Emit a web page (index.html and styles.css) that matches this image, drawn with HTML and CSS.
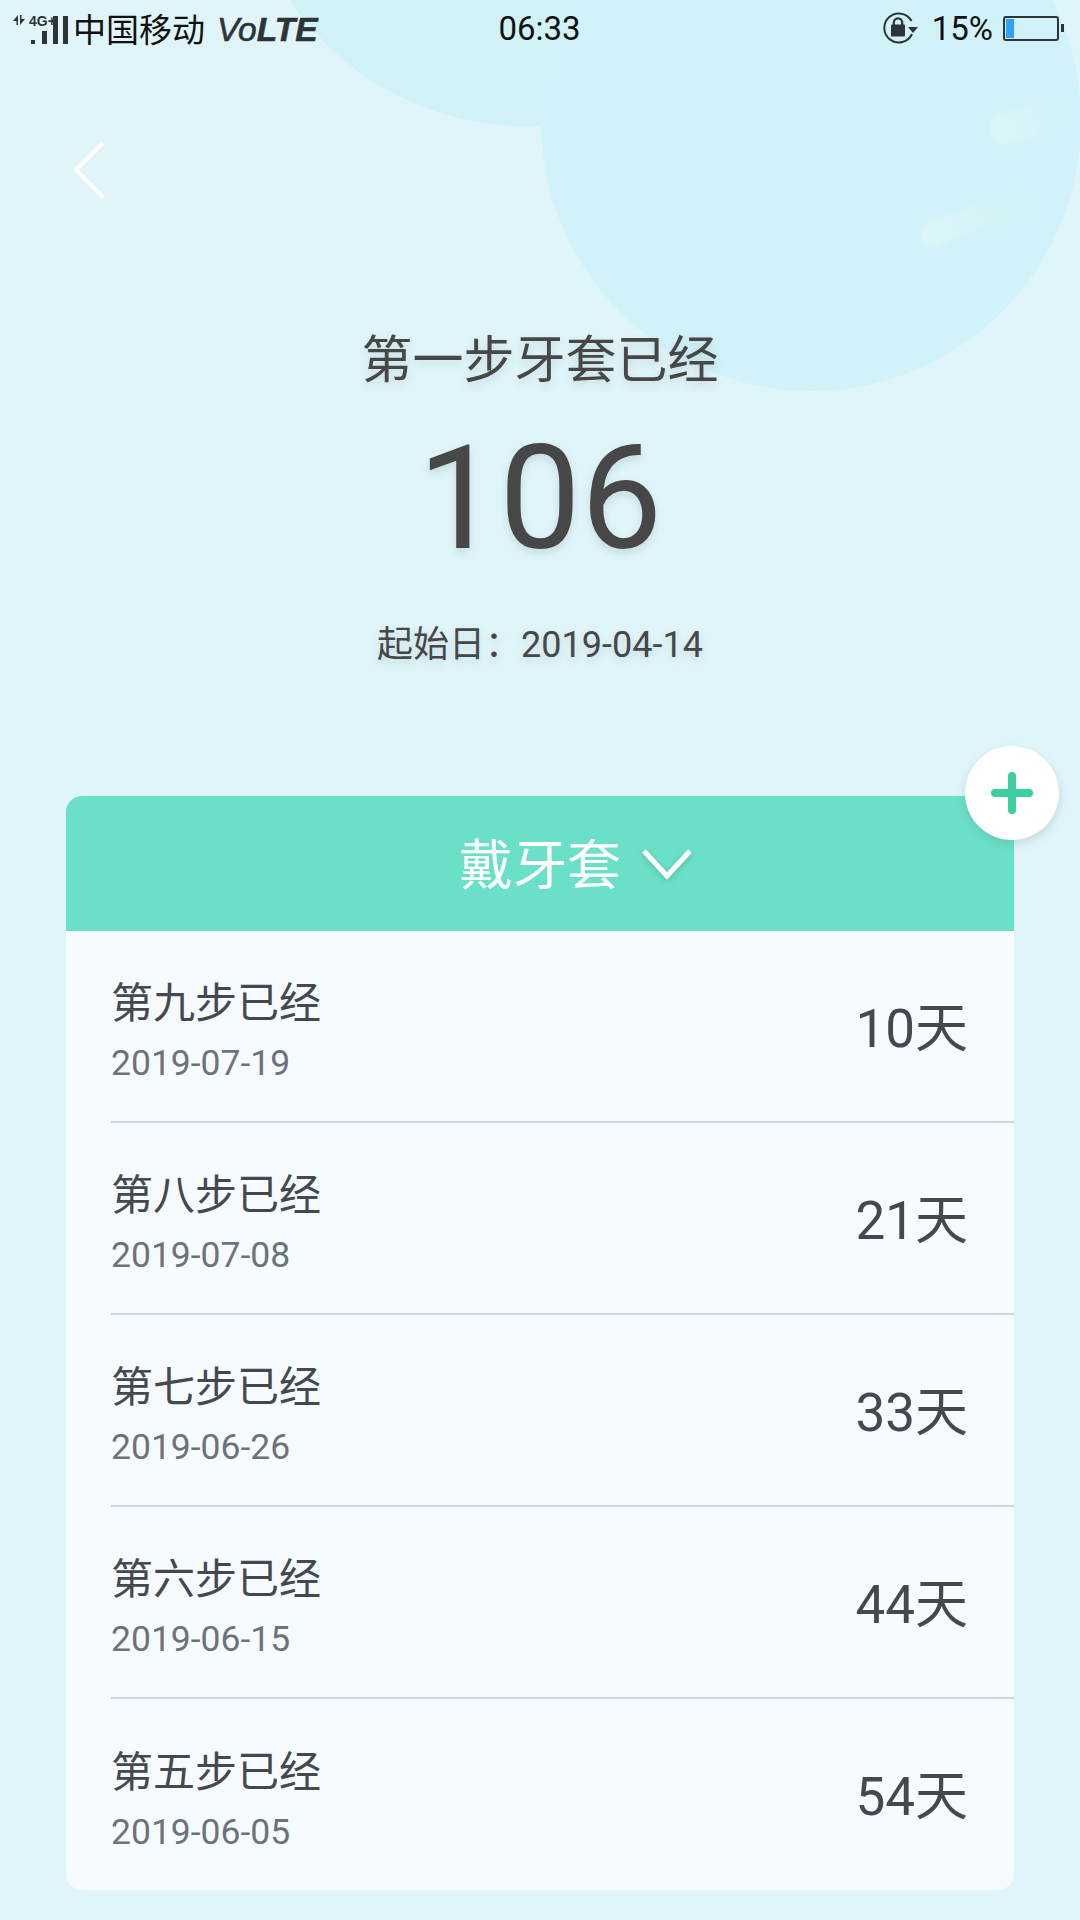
FILE: index.html

```html
<!DOCTYPE html>
<html lang="zh-CN">
<head>
  <meta charset="UTF-8">
  <title>牙套记录</title>
  <link rel="stylesheet" href="styles.css">
</head>
<body>

<div class="page">
  <div class="blob blob-top"></div>
  <div class="blob blob-right"></div>
  <div class="flake flake-a"></div>
  <div class="flake flake-b"></div>

  <div class="statusbar">
    <div class="status-left">
      <svg class="signal" width="60" height="44" viewBox="0 -8 60 44">
        <path d="M6 0 V10 H4.5 V6 H1 Z M8 10 V0 H9.5 V4 H13 Z" fill="#2d3438"/>
        <rect x="19" y="25" width="4" height="4" fill="#2d3438"/>
        <rect x="30" y="16" width="5" height="13" fill="#2d3438"/>
        <rect x="41" y="1" width="5" height="28" fill="#2d3438"/>
        <rect x="51" y="1" width="5" height="28" fill="#2d3438"/>
        <text x="17" y="11" class="signal-label">4G+</text>
      </svg>
      <span class="carrier">中国移动</span>
      <span class="volte">Vo<b>LTE</b></span>
    </div>
    <div class="clock">06:33</div>
    <div class="status-right">
      <svg class="rotate-lock" width="37" height="32" viewBox="0 0 37 32">
        <path d="M29.5 9 A14.5 14.5 0 1 0 30 22" fill="none" stroke="#2d3438" stroke-width="2"/>
        <path d="M26 15 H36 L31 21 Z" fill="#2d3438"/>
        <rect x="9" y="12.5" width="14" height="12" rx="1" fill="#2d3438"/>
        <path d="M11.8 13 V10.5 A4.2 4.2 0 0 1 20.2 10.5 V13" fill="none" stroke="#2d3438" stroke-width="2.2"/>
      </svg>
      <span class="percent">15%</span>
      <div class="battery"><div class="battery-fill"></div></div>
      <div class="battery-cap"></div>
    </div>
  </div>

  <div class="back">
    <svg width="32" height="58" viewBox="0 0 32 58">
      <path d="M30 2 L3 29 L30 56" fill="none" stroke="#fff" stroke-width="4"/>
    </svg>
  </div>

  <div class="hero">
    <div class="hero-title">第一步牙套已经</div>
    <div class="hero-days">106</div>
    <div class="hero-date">起始日：2019-04-14</div>
  </div>

  <div class="card">
    <div class="fab">
      <svg width="42" height="42" viewBox="0 0 42 42">
        <path d="M21 4 V38 M4 21 H38" stroke="#3ccf9f" stroke-width="8" stroke-linecap="round"/>
      </svg>
    </div>
    <div class="card-head">
      <span class="head-label">戴牙套
        <svg class="head-arrow" width="50" height="32" viewBox="0 0 50 32">
          <path d="M2 3 L25 28 L48 3" fill="none" stroke="#fff" stroke-width="5"/>
        </svg>
      </span>
    </div>
    <div class="row">
      <div class="row-text">
        <div class="row-title">第九步已经</div>
        <div class="row-date">2019-07-19</div>
      </div>
      <div class="row-days">10天</div>
    </div>
    <div class="row">
      <div class="row-text">
        <div class="row-title">第八步已经</div>
        <div class="row-date">2019-07-08</div>
      </div>
      <div class="row-days">21天</div>
    </div>
    <div class="row">
      <div class="row-text">
        <div class="row-title">第七步已经</div>
        <div class="row-date">2019-06-26</div>
      </div>
      <div class="row-days">33天</div>
    </div>
    <div class="row">
      <div class="row-text">
        <div class="row-title">第六步已经</div>
        <div class="row-date">2019-06-15</div>
      </div>
      <div class="row-days">44天</div>
    </div>
    <div class="row">
      <div class="row-text">
        <div class="row-title">第五步已经</div>
        <div class="row-date">2019-06-05</div>
      </div>
      <div class="row-days">54天</div>
    </div>
  </div>
</div>

</body>
</html>
```

FILE: styles.css

```css
body { margin: 0; background: #dff5f9; font-family: Roboto, "Noto Sans CJK SC", sans-serif; }

.page { position: relative; width: 1080px; height: 1920px; overflow: hidden; background: #dff5f9; }

/* background decoration */
.blob { position: absolute; border-radius: 50%; }
.blob-top { left: 243px; top: -438px; width: 564px; height: 564px; background: #d0f2f6; }
.blob-right { left: 541px; top: -149px; width: 540px; height: 540px; background: #d0f2f8; }
.flake { position: absolute; border-radius: 20px; filter: blur(1.5px); }
.flake-a { left: 988px; top: 106px; width: 80px; height: 32px; transform: rotate(-16deg); background: linear-gradient(90deg, #dcf5f9, #d0f2f8); }
.flake-b { left: 917px; top: 206px; width: 112px; height: 26px; transform: rotate(-20deg); background: linear-gradient(90deg, #dcf5f9, #d0f2f6); }

/* status bar */
.statusbar { position: relative; display: grid; grid-template-columns: 1fr auto 1fr; align-items: center; height: 56px; padding: 0 16px 0 12px; color: #111; font-size: 33px; }
.status-left { display: flex; align-items: center; }
.status-right { display: flex; align-items: center; justify-content: flex-end; }
.signal { overflow: visible; margin-top: 2px; }
.signal-label { font-family: "Liberation Sans", sans-serif; font-size: 14px; font-weight: 700; fill: #2d3438; }
.carrier { margin-left: 1px; }
.volte { margin: 4px 0 0 12px; font-family: "Liberation Sans", sans-serif; font-style: italic; font-size: 33.5px; color: #2d3438; -webkit-text-stroke: 0.6px #2d3438; }
.clock { margin-left: 3px; font-size: 33px; }
.percent { margin-left: 13px; }
.battery { margin-left: 10px; width: 56px; height: 25px; box-sizing: border-box; border: 2px solid #2d3438; border-radius: 3px; padding: 1px; }
.battery-fill { width: 8px; height: 100%; background: #2ea3f5; }
.battery-cap { margin-left: 2px; width: 3px; height: 8px; background: #2d3438; }

.back { position: relative; height: 58px; margin-top: 85px; padding-left: 73px; }

/* days summary */
.hero { position: relative; text-align: center; color: #474747; text-shadow: 0 4px 8px rgba(60, 90, 100, 0.16); }
.hero-title { margin-top: 130px; font-size: 51px; line-height: 64px; }
.hero-days { margin-top: 20px; font-size: 145px; line-height: 170px; }
.hero-date { margin-top: 37px; font-size: 36px; line-height: 50px; }

/* list card */
.card { position: absolute; left: 66px; top: 796px; width: 948px; height: 1094px; background: #f5fbff; border-radius: 16px; }
.card-head { display: flex; align-items: center; justify-content: center; height: 135px; padding-bottom: 4px; box-sizing: border-box; background: #6be0c8; border-radius: 16px 16px 0 0; color: #fff; font-size: 54px; }
.head-label { position: relative; }
.head-arrow { position: absolute; left: calc(100% + 21px); top: 26px; filter: drop-shadow(0 2px 3px rgba(60, 120, 110, 0.35)); }
.fab { position: absolute; right: -45px; top: -50px; display: flex; align-items: center; justify-content: center; width: 94px; height: 94px; border-radius: 50%; background: #fff; box-shadow: 0 4px 10px rgba(80, 110, 110, 0.2); z-index: 1; }

.row { display: flex; align-items: center; justify-content: space-between; height: 192px; margin-left: 45px; padding-right: 46px; border-bottom: 2px solid #c8d9de; box-sizing: border-box; }
.row:last-child { height: 191px; border-bottom: none; }
.row-text { padding-top: 14px; }
.row-title { font-size: 42px; line-height: 60px; color: #43494e; }
.row-date { font-size: 35.5px; line-height: 58px; color: #6b7379; }
.row-days { padding-bottom: 5px; font-size: 53px; color: #43494e; }
```
